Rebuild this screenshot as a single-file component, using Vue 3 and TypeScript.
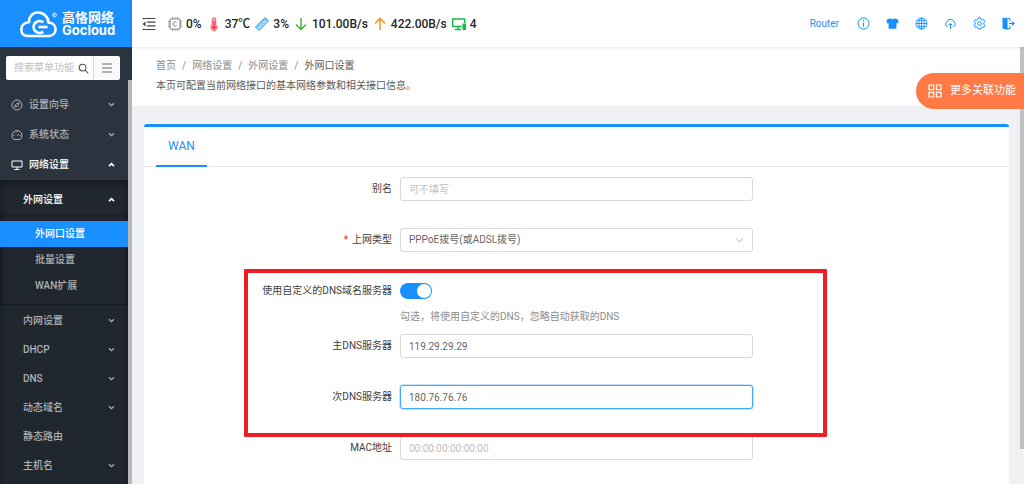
<script setup lang="ts">
import { ref } from 'vue'

interface MenuItem {
  label: string
  arrow: boolean
}

const keyword = ref('')
const alias = ref('')
const wanType = ref('pppoe')
const customDns = ref(true)
const primaryDns = ref('119.29.29.29')
const secondaryDns = ref('180.76.76.76')
const mac = ref('')

const crumbs: string[] = ['首页', '网络设置', '外网设置']
const wanPages: string[] = ['外网口设置', '批量设置', 'WAN扩展']
const networkItems: MenuItem[] = [
  { label: '内网设置', arrow: true },
  { label: 'DHCP', arrow: true },
  { label: 'DNS', arrow: true },
  { label: '动态域名', arrow: true },
  { label: '静态路由', arrow: false },
  { label: '主机名', arrow: true },
]
</script>

<template>
  <div class="app">
    <aside class="sidebar">
      <a class="logo" href="#">
        <svg class="logo-mark" viewBox="0 0 40 30" fill="none" stroke="#fff">
          <path d="M9.500 27h21.500a6.700 6.700 0 0 0 1-13.300h-1.500C30.500 8 25.500 3.500 20 3.500c-5.500 0-9 4-9 9.500C6.500 13.500 3.300 16.500 3.300 20.500c0 4 2.700 6.500 6.200 6.500z" stroke-width="2.600" stroke-linejoin="round" />
          <path d="M25.200 13.400a5.900 5.900 0 1 0 0 9.200" stroke-width="2.700" />
          <path d="M20.500 18h9" stroke-width="2.700" />
          <circle cx="36.500" cy="6" r="2" stroke-width="0.700" />
          <path d="M36 7.200V5h.8v1h-.8l1 1.200" stroke-width="0.500" />
        </svg>
        <span class="logo-text">
          <span class="logo-cn">高恪网络</span>
          <span class="logo-en">Gocloud</span>
        </span>
      </a>
      <div class="search">
        <label class="search-box">
          <input v-model="keyword" type="text" placeholder="搜索菜单功能" aria-label="搜索菜单功能" />
          <svg viewBox="0 0 12 12" fill="none" stroke="#555" stroke-width="1.200">
            <circle cx="5" cy="5" r="3.700" />
            <path d="M7.800 7.800l3.400 3.400" />
          </svg>
        </label>
        <button class="search-menu" type="button" aria-label="菜单">
          <svg viewBox="0 0 12 12" stroke="#666" stroke-width="1"><path d="M1 2h10M1 6h10M1 10h10" /></svg>
        </button>
      </div>
      <div class="side-body">
        <nav class="menu">
          <a class="item" href="#">
            <svg class="item-icon" viewBox="0 0 12 12" fill="none" stroke="currentColor">
              <circle cx="6" cy="6" r="5" />
              <path d="M8.500 3.500L7 7 3.500 8.500 5 5z" stroke-width="0.900" />
            </svg>
            <span class="label">设置向导</span>
            <svg class="caret" viewBox="0 0 8 6" fill="none" stroke="currentColor" stroke-width="1.400"><path d="M1 1.500l3 3 3-3" /></svg>
          </a>
          <a class="item" href="#">
            <svg class="item-icon" viewBox="0 0 12 12" fill="none" stroke="currentColor">
              <path d="M3 10.500a5 5 0 1 1 6 0z" />
              <path d="M6 7l2-2M6 2.500v1M2.500 6.500h1M8.500 6.500h1M3.600 4l.7.7" stroke-width="0.900" />
            </svg>
            <span class="label">系统状态</span>
            <svg class="caret" viewBox="0 0 8 6" fill="none" stroke="currentColor" stroke-width="1.400"><path d="M1 1.500l3 3 3-3" /></svg>
          </a>
          <a class="item open" href="#">
            <svg class="item-icon" viewBox="0 0 12 12" fill="none" stroke="currentColor">
              <path d="M1 2h10v6H1zM6 8v2.500M3.500 10.500h5" />
            </svg>
            <span class="label">网络设置</span>
            <svg class="caret" viewBox="0 0 8 6" fill="none" stroke="currentColor" stroke-width="2"><path d="M1 5l3-3 3 3" /></svg>
          </a>
          <div class="submenu">
            <a class="item child open" href="#">
              <span class="label">外网设置</span>
              <svg class="caret" viewBox="0 0 8 6" fill="none" stroke="currentColor" stroke-width="2"><path d="M1 5l3-3 3 3" /></svg>
            </a>
            <div class="pages">
              <a v-for="(page, i) in wanPages" :key="page" class="page" :class="{ active: i === 0 }" href="#">{{ page }}</a>
            </div>
            <a v-for="item in networkItems" :key="item.label" class="item child" href="#">
              <span class="label">{{ item.label }}</span>
              <svg v-if="item.arrow" class="caret" viewBox="0 0 8 6" fill="none" stroke="currentColor" stroke-width="1.400"><path d="M1 1.500l3 3 3-3" /></svg>
            </a>
          </div>
        </nav>
        <div class="side-scroll"></div>
      </div>
    </aside>

    <div class="main">
      <header class="topbar">
        <button class="icon-button" type="button" aria-label="收起菜单">
          <svg class="fold" viewBox="0 0 14 14" fill="none" stroke="#444" stroke-width="1.200">
            <path d="M0.500 1.500h13M5 5.200h8.500M5 8.800h8.500M0.500 12.500h13" />
            <path d="M3.500 4.500v5L0.500 7z" fill="#444" stroke="none" />
          </svg>
        </button>
        <div class="stats">
          <span class="stat">
            <svg viewBox="0 0 14 14" fill="none" stroke="#8c8c8c">
              <rect x="2" y="2" width="10" height="10" rx="1" stroke-width="1.200" />
              <path d="M4.500 0v2M7 0v2M9.500 0v2M4.500 12v2M7 12v2M9.500 12v2M0 4.500h2M0 7h2M0 9.500h2M12 4.500h2M12 7h2M12 9.500h2" />
              <path d="M8.700 5.500a2.200 2.200 0 1 0 0 3" />
            </svg>0%
          </span>
          <span class="stat">
            <svg viewBox="0 0 14 14" fill="none" stroke="#f5384a" stroke-width="0.900">
              <path d="M5.300 8V2.500a1.700 1.700 0 0 1 3.400 0V8a3 3 0 1 1-3.400 0z" fill="#ffc2c7" />
              <circle cx="7" cy="10.300" r="1.900" fill="#f5384a" stroke="none" />
              <path d="M7 10V4" stroke-width="1.300" />
            </svg>37℃
          </span>
          <span class="stat">
            <svg viewBox="0 0 14 14" fill="none" stroke="#2b9be0">
              <path d="M0.500 10L10 0.500 13.500 4 4 13.500z" fill="#a6d8f7" />
              <path d="M2.500 8l2 2M4.300 6.200l1.500 1.500M6 4.500l2 2M7.800 2.700l1.500 1.500M9.500 1.500l2 2" stroke-width="0.800" />
            </svg>3%
          </span>
          <span class="stat">
            <svg viewBox="0 0 14 14" fill="none" stroke="#3fae29" stroke-width="1.400"><path d="M7 1v11.500M2 7.500l5 5 5-5" /></svg>101.00B/s
          </span>
          <span class="stat">
            <svg viewBox="0 0 14 14" fill="none" stroke="#fa8c16" stroke-width="1.400"><path d="M7 13V1.500M2 6.500l5-5 5 5" /></svg>422.00B/s
          </span>
          <span class="stat">
            <svg viewBox="0 0 14 14" fill="none" stroke="#16b84a" stroke-width="1.400">
              <path d="M10 9.500H0.700V2h12v4M6 9.500v2.800M3 12.500h6" />
              <rect x="10.500" y="6.500" width="3.500" height="6.500" fill="#16b84a" stroke="none" />
            </svg>4
          </span>
        </div>
        <div class="tools">
          <a class="router" href="#">Router</a>
          <button class="icon-button" type="button" aria-label="信息">
            <svg viewBox="0 0 13 13" fill="none" stroke="#1890ff"><circle cx="6.500" cy="6.500" r="5.500" /><path d="M6.500 5.700v4M6.500 3.300v1.200" /></svg>
          </button>
          <button class="icon-button" type="button" aria-label="主题">
            <svg viewBox="0 0 13 13" fill="#1890ff"><path d="M4 1.300c1 1.200 4 1.200 5 0l3.300 1.500v3.400h-1.900v5.600H2.600V6.200H.7V2.800z" /></svg>
          </button>
          <button class="icon-button" type="button" aria-label="语言">
            <svg viewBox="0 0 13 13" fill="none" stroke="#1890ff" stroke-width="0.900">
              <circle cx="6.500" cy="6.500" r="5.500" /><ellipse cx="6.500" cy="6.500" rx="2.700" ry="5.500" /><path d="M6.500 1v11M1 6.500h11M1.800 3.700h9.400M1.800 9.300h9.400" />
            </svg>
          </button>
          <button class="icon-button" type="button" aria-label="云升级">
            <svg viewBox="0 0 13 13" fill="none" stroke="#1890ff">
              <path d="M3.700 9.700A2.600 2.600 0 0 1 2.800 5a3.900 3.900 0 0 1 7.400 0 2.600 2.600 0 0 1-.9 4.700M6.500 12V6.500M4.700 8.200l1.800-1.800 1.800 1.800" />
            </svg>
          </button>
          <button class="icon-button" type="button" aria-label="设置">
            <svg viewBox="0 0 13 13" fill="none" stroke="#1890ff">
              <path d="M5.300 0.900h2.400l.4 1.500 1.100.7 1.500-.5 1.200 2.100-1.100 1.100v1.400l1.100 1.100-1.200 2.100-1.500-.5-1.100.7-.4 1.500H5.300l-.4-1.500-1.100-.7-1.500.5-1.200-2.100 1.100-1.100V5.800L1.100 4.700l1.200-2.100 1.500.5 1.100-.7z" />
              <circle cx="6.500" cy="6.500" r="1.900" />
            </svg>
          </button>
          <button class="icon-button" type="button" aria-label="退出">
            <svg viewBox="0 0 13 13" fill="none" stroke="#1890ff">
              <path d="M0.500 1l5 1v11l-5-1.500z" fill="#1890ff" stroke="none" />
              <path d="M1 1.300h7v3.200M5 11.500h3V8.500M7 6.500h4" />
              <path d="M10 4l3 2.500-3 2.500z" fill="#1890ff" stroke="none" />
            </svg>
          </button>
        </div>
      </header>

      <div class="viewport">
        <main class="content">
          <section class="page-head">
            <nav class="crumbs" aria-label="面包屑">
              <template v-for="crumb in crumbs" :key="crumb">
                <a href="#">{{ crumb }}</a><span class="slash">/</span>
              </template>
              <span class="current">外网口设置</span>
            </nav>
            <p>本页可配置当前网络接口的基本网络参数和相关接口信息。</p>
          </section>

          <section class="card">
            <div class="tabs" role="tablist">
              <button class="tab" type="button" role="tab" aria-selected="true">WAN</button>
            </div>
            <form class="form" @submit.prevent>
              <div class="row">
                <label for="alias">别名</label>
                <input id="alias" v-model="alias" class="field" type="text" placeholder="可不填写" />
              </div>
              <div class="row">
                <label for="wan-type"><span class="star">*</span>上网类型</label>
                <div class="select">
                  <select id="wan-type" v-model="wanType" class="field">
                    <option value="pppoe">PPPoE拨号(或ADSL拨号)</option>
                  </select>
                  <svg viewBox="0 0 10 8" fill="none" stroke="#b0b0b0"><path d="M1.500 1.500L5 6l3.500-4.500" /></svg>
                </div>
              </div>
              <div class="dns">
                <div class="row switch-row">
                  <label for="custom-dns">使用自定义的DNS域名服务器</label>
                  <input id="custom-dns" v-model="customDns" class="switch" type="checkbox" role="switch" />
                  <p class="hint">勾选，将使用自定义的DNS，忽略自动获取的DNS</p>
                </div>
                <div class="row">
                  <label for="dns1">主DNS服务器</label>
                  <input id="dns1" v-model="primaryDns" class="field" type="text" />
                </div>
                <div class="row">
                  <label for="dns2">次DNS服务器</label>
                  <input id="dns2" v-model="secondaryDns" class="field focused" type="text" />
                </div>
              </div>
              <div class="row">
                <label for="mac">MAC地址</label>
                <input id="mac" v-model="mac" class="field" type="text" placeholder="00:00:00:00:00:00" />
              </div>
            </form>
          </section>
        </main>
        <div class="scrollbar"><div class="thumb"></div></div>
      </div>
    </div>

    <button class="more" type="button">
      <svg viewBox="0 0 14 14" fill="none" stroke="#fff" stroke-width="1.200">
        <path d="M1 1h4.600v4.600H1zM8.400 1H13v4.600H8.400zM1 8.400h4.600V13H1zM8.400 8.400H13V13H8.400z" />
      </svg>
      更多关联功能
    </button>
  </div>
</template>

<style>
body {
  margin: 0;
  overflow: hidden;
}
</style>

<style scoped>
.app {
  display: flex;
  height: 100vh;
  overflow: hidden;
  font: 10px/20px Roboto, "Noto Sans CJK SC", sans-serif;
  color: #595959;
}
.app * {
  box-sizing: border-box;
}
a {
  color: inherit;
  text-decoration: none;
}
p {
  margin: 0;
}
button,
input,
select {
  font: inherit;
  color: inherit;
  margin: 0;
}
svg {
  display: block;
  flex: none;
}

/* Sidebar */
.sidebar {
  flex: none;
  width: 132px;
  display: flex;
  flex-direction: column;
  background: #2b343e;
  color: #adb2b7;
}
.logo {
  flex: none;
  height: 47px;
  display: flex;
  align-items: center;
  gap: 4px;
  padding-left: 18px;
  background: #1890ff;
  color: #fff;
}
.logo-mark {
  width: 40px;
  height: 30px;
}
.logo-text {
  display: flex;
  flex-direction: column;
  font-weight: 700;
  font-size: 13px;
  line-height: 13px;
}
.logo-en {
  font-family: Inter, sans-serif;
}
.search {
  flex: none;
  display: flex;
  height: 24px;
  margin: 9px 12px 0 6px;
}
.search-box {
  flex: 1;
  min-width: 0;
  display: flex;
  align-items: center;
  padding: 0 4px 0 8px;
  background: #fff;
  border-radius: 2px 0 0 2px;
}
.search-box input {
  flex: 1;
  min-width: 0;
  padding: 0;
  border: 0;
  outline: 0;
  background: none;
}
.search-box svg {
  width: 11px;
  height: 11px;
}
.search-menu {
  width: 27px;
  display: grid;
  place-items: center;
  padding: 0;
  border: 0;
  border-left: 1px solid #d9d9d9;
  border-radius: 0 2px 2px 0;
  background: #fafafa;
}
.search-menu svg {
  width: 12px;
  height: 12px;
}
::placeholder {
  color: #bfbfbf;
  opacity: 1;
}
.side-body {
  flex: 1;
  min-height: 0;
  display: flex;
}
.menu {
  flex: 1;
  display: flex;
  flex-direction: column;
  padding-top: 10px;
  font-weight: 500;
  overflow: hidden;
}
.side-scroll {
  width: 4px;
  background: #b8b8b8;
}
.item {
  flex: none;
  display: flex;
  align-items: center;
  height: 29px;
  margin-bottom: 1px;
  padding: 0 13px 0 11px;
}
.item-icon {
  width: 12px;
  height: 12px;
  margin-right: 6px;
}
.label {
  flex: 1;
}
.caret {
  width: 7px;
  height: 5px;
}
.open {
  color: #fff;
}
.submenu {
  flex: 1 0 auto;
  padding-top: 5px;
  background: #20272e;
  box-shadow: inset 0 2px 6px rgba(0, 0, 0, 0.4);
}
.child {
  margin-bottom: 0;
  padding-left: 23px;
}
.pages {
  margin: 1px 0;
  padding: 6px 0;
  box-shadow: inset 0 2px 4px rgba(0, 0, 0, 0.25), inset 0 -1px 1px rgba(0, 0, 0, 0.2);
}
.page {
  display: block;
  padding-left: 35px;
  line-height: 26px;
}
.page.active {
  background: #1890ff;
  color: #fff;
}

/* Top bar */
.main {
  flex: 1;
  min-width: 0;
  display: flex;
  flex-direction: column;
}
.topbar {
  flex: none;
  z-index: 1;
  height: 47px;
  display: flex;
  align-items: center;
  padding: 0 9px 0 10px;
  background: #fff;
  box-shadow: 0 1px 3px rgba(0, 21, 41, 0.1);
}
.icon-button {
  padding: 0;
  border: 0;
  background: none;
}
.icon-button svg {
  width: 13px;
  height: 13px;
}
.icon-button .fold {
  width: 14px;
  height: 14px;
}
.stats {
  display: flex;
  gap: 5px;
  margin-left: 12px;
  color: #262626;
  font-size: 12px;
  font-weight: 500;
}
.stat {
  display: flex;
  align-items: center;
  gap: 4px;
}
.stat svg {
  width: 14px;
  height: 14px;
}
.tools {
  display: flex;
  align-items: center;
  gap: 16px;
  margin-left: auto;
}
.router {
  margin-right: 2px;
  color: #1890ff;
}

/* Page */
.viewport {
  flex: 1;
  min-height: 0;
  display: flex;
}
.content {
  flex: 1;
  min-width: 0;
  display: flex;
  flex-direction: column;
  background: #eff1f5;
}
.scrollbar {
  width: 4px;
  background: #f1f1f1;
}
.thumb {
  height: 92%;
  background: #c1c1c1;
}
.page-head {
  flex: none;
  padding: 9px 24px 10px;
  background: #fff;
}
.crumbs {
  display: flex;
  color: #8c8c8c;
}
.slash {
  margin: 0 6px;
}
.current {
  color: #595959;
}
.card {
  flex: 1;
  margin: 18px 11px 0 12px;
  border-top: 3px solid #1890ff;
  border-radius: 3px 3px 0 0;
  background: #fff;
}
.tabs {
  display: flex;
  height: 40px;
  padding-left: 12px;
  border-bottom: 1px solid #e8e8e8;
}
.tab {
  height: 40px;
  padding: 0 12px;
  border: 0;
  border-bottom: 2px solid #1890ff;
  background: none;
  color: #1890ff;
  font-size: 12px;
}
.form {
  display: flex;
  flex-direction: column;
  gap: 27px;
  padding-top: 10px;
}
.row {
  display: grid;
  grid-template-columns: 256fr 353fr 256fr;
  align-items: center;
}
.row label {
  padding-right: 8px;
  text-align: right;
  line-height: 24px;
  color: #404040;
}
.star {
  margin-right: 4px;
  color: #f5222d;
}
.field {
  width: 100%;
  height: 24px;
  padding: 0 8px;
  border: 1px solid #d9d9d9;
  border-radius: 3px;
  outline: 0;
  background: #fff;
  color: #666;
}
.field.focused {
  border-color: #40a9ff;
  box-shadow: 0 0 0 1px rgba(24, 144, 255, 0.25);
}
.select {
  display: grid;
  align-items: center;
}
.select > * {
  grid-area: 1 / 1;
}
.select select {
  appearance: none;
}
.select svg {
  justify-self: end;
  width: 9px;
  height: 7px;
  margin-right: 9px;
  pointer-events: none;
}
.dns {
  position: relative;
  display: flex;
  flex-direction: column;
  gap: 27px;
}
.dns::after {
  content: "";
  position: absolute;
  inset: -10px 21% -28px 12%;
  left: calc(12% - 4px);
  border: 4px solid #ee1c25;
  border-radius: 1px;
  pointer-events: none;
}
.switch-row {
  margin-bottom: -20px;
}
.switch {
  appearance: none;
  display: flex;
  justify-content: flex-end;
  width: 32px;
  height: 16px;
  padding: 1px;
  border-radius: 8px;
  background: #1890ff;
}
.switch::before {
  content: "";
  width: 14px;
  height: 14px;
  border-radius: 50%;
  background: #fff;
}
.switch:not(:checked) {
  justify-content: flex-start;
  background: #bfbfbf;
}
.hint {
  grid-column: 2 / 4;
  padding-top: 4px;
  color: #8c8c8c;
}

/* Floating action */
.more {
  position: absolute;
  top: 73px;
  right: 0;
  z-index: 2;
  display: flex;
  align-items: center;
  gap: 8px;
  height: 36px;
  padding: 0 8px 0 12px;
  border: 0;
  border-radius: 18px 0 0 18px;
  background: #ff7a45;
  color: #fff;
  font-size: 11px;
}
.more svg {
  width: 14px;
  height: 14px;
}
</style>
